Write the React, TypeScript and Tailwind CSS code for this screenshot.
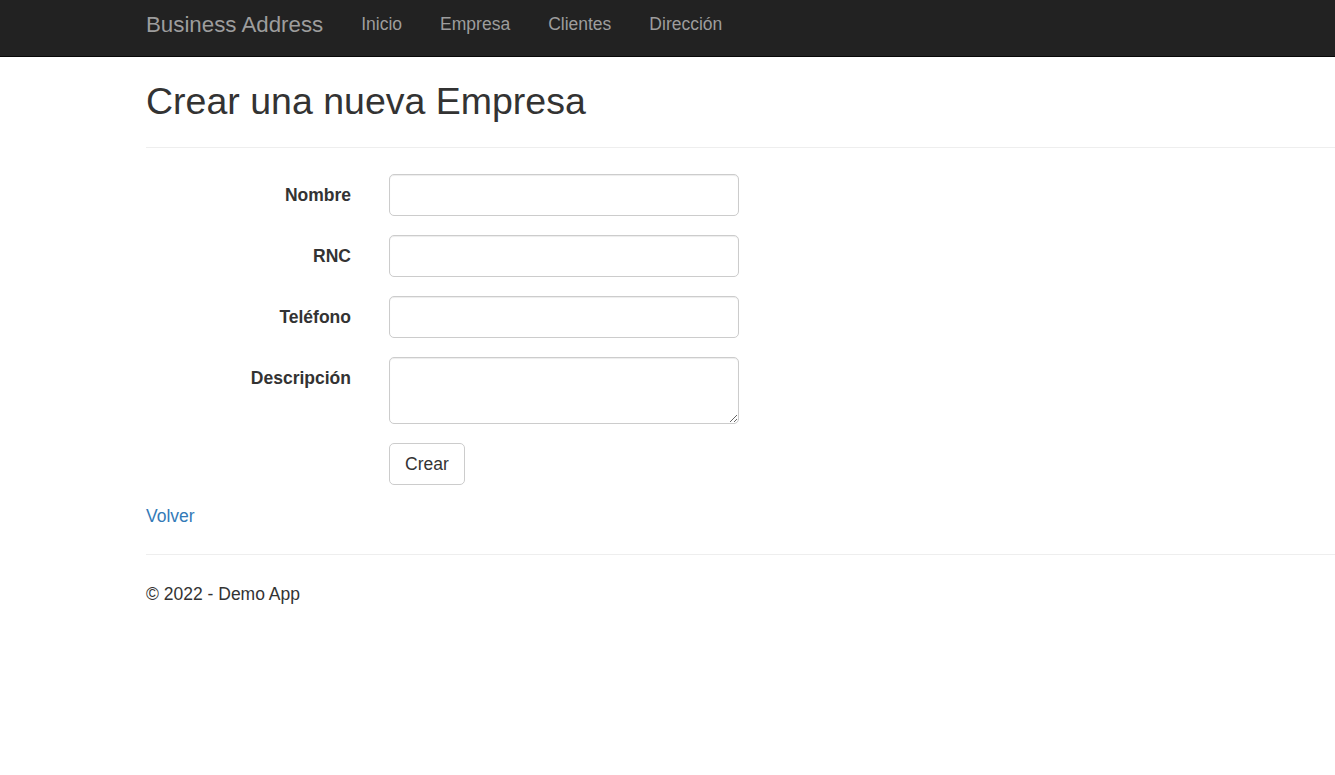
import React from "react";

const fieldCls =
  "block w-[350px] h-[42px] rounded-[5px] border border-[#ccc] bg-white px-[15px] text-[17.5px] text-[#555] shadow-[inset_0_1px_1px_rgba(0,0,0,0.075)] outline-none";

function Row({ label, children, top = true }: { label: string; children: React.ReactNode; top?: boolean }) {
  return (
    <div className="flex mb-[19px]">
      <label className={`w-[205px] text-right font-bold text-[17.5px] leading-[25px] text-[#333] ${top ? "pt-[9px]" : ""}`}>
        {label}
      </label>
      <div className="ml-[38px]">{children}</div>
    </div>
  );
}

export default function App() {
  return (
    <div className="min-h-[775px] bg-white text-[#333]" style={{ fontFamily: '"Liberation Sans", Arial, sans-serif' }}>
      <nav className="h-[57px] bg-[#222] border-b border-[#080808] pl-[146px] flex items-start">
        <span className="text-[22.3px] leading-[25px] pt-[12px] text-[#9d9d9d]">Business Address</span>
        <div className="flex ml-[19px]">
          {["Inicio", "Empresa", "Clientes", "Dirección"].map((t) => (
            <span key={t} className="px-[19px] pt-[12px] text-[17.5px] leading-[25px] text-[#9d9d9d]">
              {t}
            </span>
          ))}
        </div>
      </nav>
      <div className="pl-[146px]">
        <h2 className="mt-[24px] text-[37.5px] leading-[41px] font-normal text-[#333]">Crear una nueva Empresa</h2>
        <div className="mt-[25px] border-t border-[#eee]" />
        <form className="mt-[26px]">
          <Row label="Nombre">
            <input className={fieldCls} />
          </Row>
          <Row label="RNC">
            <input className={fieldCls} />
          </Row>
          <Row label="Teléfono">
            <input className={fieldCls} />
          </Row>
          <Row label="Descripción">
            <textarea className={`${fieldCls} h-[67px] py-[7px]`} />
          </Row>
          <div className="flex mb-[19px]">
            <div className="w-[205px]" />
            <button
              type="button"
              className="ml-[38px] h-[42px] px-[15px] rounded-[5px] border border-[#ccc] bg-white text-[17.5px] text-[#333]"
            >
              Crear
            </button>
          </div>
        </form>
        <div className="text-[17.5px] leading-[25px]">
          <a className="text-[#337ab7]" href="#">Volver</a>
        </div>
        <div className="mt-[25px] border-t border-[#eee]" />
        <footer className="mt-[27px] text-[17.5px] leading-[25px] text-[#333]">© 2022 - Demo App</footer>
      </div>
    </div>
  );
}
